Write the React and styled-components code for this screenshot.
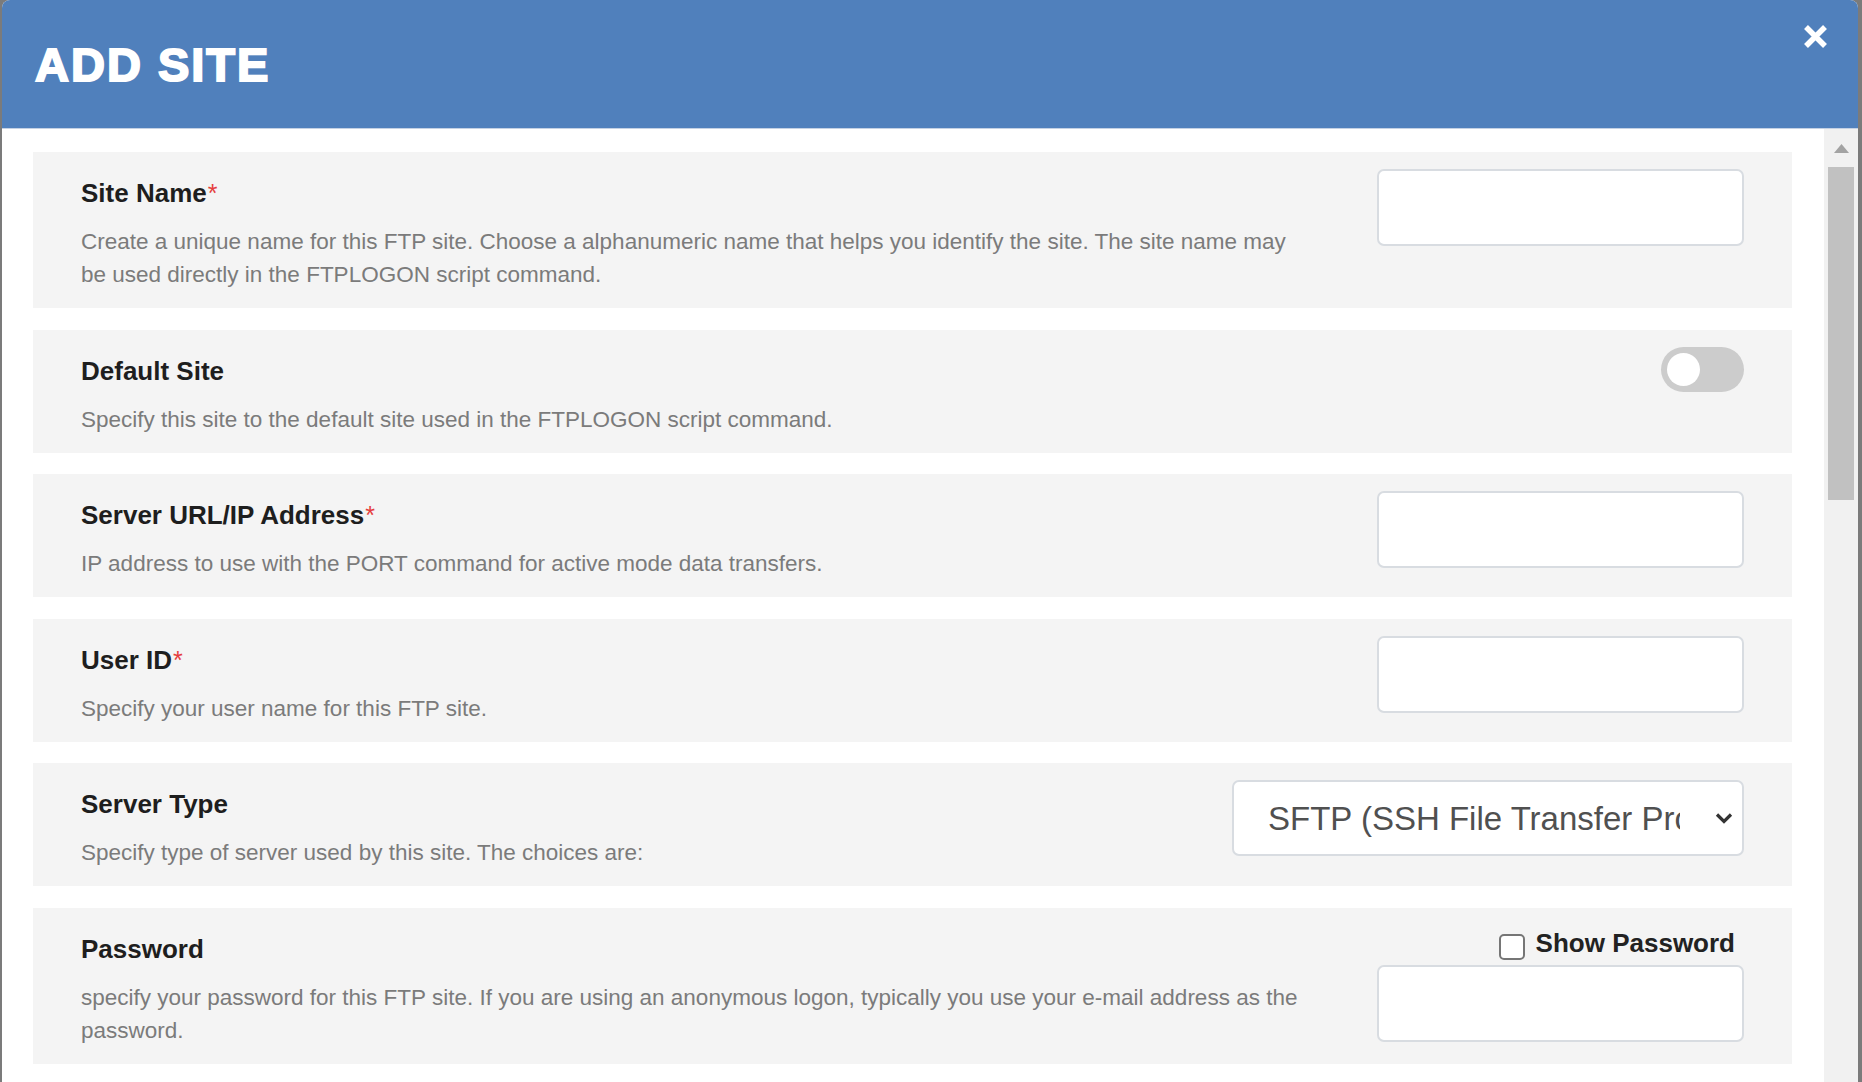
import styled, { createGlobalStyle } from 'styled-components';

const GlobalStyle = createGlobalStyle`
  html, body {
    margin: 0;
    padding: 0;
    height: 100%;
  }
  body {
    background: #7b7b7b;
    font-family: "Liberation Sans", Arial, sans-serif;
    overflow: hidden;
  }
  #root {
    height: 100%;
  }
`;

const Window = styled.div`
  margin-left: 2px;
  width: 1856px;
  height: 1082px;
  background: #fff;
  border-radius: 8px 8px 0 0;
  overflow: hidden;
  display: flex;
  flex-direction: column;
`;

const Header = styled.header`
  height: 128px;
  flex-shrink: 0;
  background: #5080bc;
  border-bottom: 1px solid #c4d1e4;
  display: flex;
  align-items: flex-start;
  justify-content: space-between;
  padding: 0 30px 0 33px;
`;

const Title = styled.h1`
  margin: 0;
  align-self: center;
  color: #fff;
  font-size: 47px;
  font-weight: 700;
  line-height: 1;
  letter-spacing: 2px;
  -webkit-text-stroke: 2px #fff;
`;

const CloseButton = styled.button`
  margin-top: 25px;
  padding: 0;
  width: 25px;
  height: 23px;
  border: none;
  background: none;
  cursor: pointer;
  display: flex;
`;

const Body = styled.div`
  flex: 1;
  min-height: 0;
  display: flex;
`;

const Content = styled.div`
  flex: 1;
  overflow: hidden;
  padding: 23px 32px 0 31px;
  display: flex;
  flex-direction: column;
  gap: 21.6px;
`;

const ScrollTrack = styled.div`
  width: 34px;
  flex-shrink: 0;
  background: #f1f1f1;
  display: flex;
  flex-direction: column;
  align-items: center;
`;

const ScrollArrow = styled.div`
  height: 38px;
  width: 100%;
  display: flex;
  align-items: center;
  justify-content: center;
`;

const ScrollThumb = styled.div`
  width: 26px;
  height: 333px;
  background: #c1c1c1;
`;

// 설정 항목 한 줄
const Card = styled.section`
  display: flex;
  align-items: flex-start;
  gap: 70px;
  background: #f4f4f4;
  padding: 17px 48px 17px 48px;
  flex-shrink: 0;
`;

const Info = styled.div`
  flex: 1;
  min-width: 0;
  padding-top: 9px;
`;

const Label = styled.div`
  font-size: 26px;
  line-height: 30px;
  font-weight: 700;
  color: #1e1e1e;
`;

const Required = styled.span`
  color: #e53e3e;
  font-size: 25px;
  font-weight: 400;
  margin-left: 1px;
`;

const Desc = styled.p`
  margin: 17px 0 0;
  font-size: 22.5px;
  line-height: 33px;
  color: #7b7b7b;
`;

const Control = styled.div`
  width: ${props => props.$wide ? '512px' : '367px'};
  flex-shrink: 0;
  display: flex;
  flex-direction: column;
  align-items: flex-end;
`;

const TextInput = styled.input`
  width: 100%;
  height: 77px;
  box-sizing: border-box;
  border: 2px solid #d8dce1;
  border-radius: 7px;
  background: #fff;
  outline: none;
  font-size: 24px;
  padding: 0 16px;
`;

const Toggle = styled.span`
  width: 83px;
  height: 45px;
  border-radius: 23px;
  background: #cccccc;
  display: flex;
  align-items: center;
  padding-left: 6px;
  box-sizing: border-box;
`;

const Knob = styled.span`
  width: 33px;
  height: 33px;
  border-radius: 50%;
  background: #fff;
`;

const SelectWrap = styled.div`
  position: relative;
  width: 100%;
`;

const Select = styled.select`
  width: 100%;
  height: 76px;
  box-sizing: border-box;
  appearance: none;
  border: 2px solid #d8dce1;
  border-radius: 7px;
  background: #fff;
  font-family: "Liberation Sans", Arial, sans-serif;
  font-size: 33px;
  color: #505050;
  padding: 0 62px 0 34px;
  outline: none;
`;

const Chevron = styled.svg`
  position: absolute;
  right: 11px;
  top: 50%;
  transform: translateY(-50%);
  pointer-events: none;
`;

const ShowRow = styled.label`
  display: flex;
  align-items: flex-start;
  gap: 11px;
  height: 30px;
  margin: 0 0 10px;
  padding-right: 9px;
`;

const Checkbox = styled.input`
  appearance: none;
  margin: 9px 0 0;
  width: 26px;
  height: 26px;
  box-sizing: border-box;
  border: 2px solid #767676;
  border-radius: 5px;
  background: #fff;
`;

const ShowText = styled.span`
  font-size: 26px;
  line-height: 30px;
  font-weight: 700;
  color: #222;
  padding-top: 3px;
`;

const fields = [
  {
    label: 'Site Name',
    required: true,
    desc: 'Create a unique name for this FTP site. Choose a alphanumeric name that helps you identify the site. The site name may be used directly in the FTPLOGON script command.',
    kind: 'text',
  },
  {
    label: 'Default Site',
    desc: 'Specify this site to the default site used in the FTPLOGON script command.',
    kind: 'toggle',
  },
  {
    label: 'Server URL/IP Address',
    required: true,
    desc: 'IP address to use with the PORT command for active mode data transfers.',
    kind: 'text',
  },
  {
    label: 'User ID',
    required: true,
    desc: 'Specify your user name for this FTP site.',
    kind: 'text',
  },
  {
    label: 'Server Type',
    desc: 'Specify type of server used by this site. The choices are:',
    kind: 'select',
  },
  {
    label: 'Password',
    desc: 'specify your password for this FTP site. If you are using an anonymous logon, typically you use your e-mail address as the password.',
    kind: 'password',
  },
];

const FieldControl = ({ kind }) => {
  if (kind === 'toggle') {
    return (
      <Control>
        <Toggle><Knob /></Toggle>
      </Control>
    );
  }
  if (kind === 'select') {
    return (
      <Control $wide>
        <SelectWrap>
          <Select defaultValue="sftp">
            <option value="ftp">FTP (File Transfer Protocol)</option>
            <option value="sftp">SFTP (SSH File Transfer Protocol)</option>
            <option value="ftps">FTPS (FTP over SSL)</option>
          </Select>
          <Chevron width="18" height="12" viewBox="0 0 18 12">
            <path d="M2 2.5 L9 9.5 L16 2.5" fill="none" stroke="#333" strokeWidth="3.2" />
          </Chevron>
        </SelectWrap>
      </Control>
    );
  }
  if (kind === 'password') {
    return (
      <Control>
        <ShowRow>
          <Checkbox type="checkbox" />
          <ShowText>Show Password</ShowText>
        </ShowRow>
        <TextInput type="password" />
      </Control>
    );
  }
  return (
    <Control>
      <TextInput type="text" />
    </Control>
  );
};

const App = () => {
  return (
    <>
      <GlobalStyle />
      <Window>
        <Header>
          <Title>ADD SITE</Title>
          <CloseButton aria-label="close">
            <svg width="25" height="23" viewBox="0 0 25 23">
              <path d="M3 2 L22 21 M22 2 L3 21" stroke="#fff" strokeWidth="5.5" />
            </svg>
          </CloseButton>
        </Header>
        <Body>
          <Content>
            {fields.map(f => (
              <Card key={f.label}>
                <Info>
                  <Label>
                    {f.label}
                    {f.required && <Required>*</Required>}
                  </Label>
                  <Desc>{f.desc}</Desc>
                </Info>
                <FieldControl kind={f.kind} />
              </Card>
            ))}
          </Content>
          <ScrollTrack>
            <ScrollArrow>
              <svg width="15" height="9" viewBox="0 0 15 9">
                <polygon points="0,9 7.5,0 15,9" fill="#a3a3a3" />
              </svg>
            </ScrollArrow>
            <ScrollThumb />
          </ScrollTrack>
        </Body>
      </Window>
    </>
  );
};

export default App;
